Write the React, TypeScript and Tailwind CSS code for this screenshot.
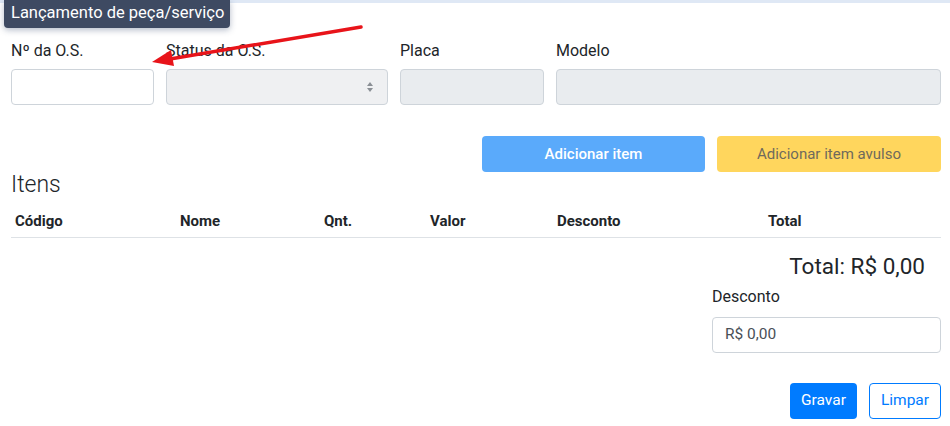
import React from 'react';

const labelCls = 'block mb-[6px] text-[16px] leading-6 text-[#212529]';
const inputCls = 'h-[36px] rounded-[4px] border border-[#ced4da]';

export default function App() {
  return (
    <div className="relative w-[950px] h-[426px] overflow-hidden bg-white font-['Roboto',sans-serif] text-[#212529]">
      <div className="h-[3px] bg-[#dfe8f5]" />

      {/* tooltip */}
      <div className="absolute left-[4px] top-0 h-[28px] w-[226px] rounded-b-[4px] bg-[#3e4a62] pl-[7px] text-[16.5px] leading-[26px] text-white shadow-[0_2px_6px_rgba(40,60,100,0.35)]">
        Lançamento de peça/serviço
      </div>

      <div className="pl-[11px] pr-[9px] pt-[36px]">
        {/* fields */}
        <div className="flex gap-3">
          <div className="w-[143px]">
            <label className={labelCls}>Nº da O.S.</label>
            <div className={`${inputCls} bg-white`} />
          </div>
          <div className="w-[222px]">
            <label className={labelCls}>Status da O.S.</label>
            <div className={`${inputCls} flex items-center justify-end bg-[#eff0f2] pr-[13px]`}>
              <svg width="8" height="12" viewBox="0 0 8 12">
                <path d="M4 1 L7 5 L1 5 Z" fill="#8a8f95" />
                <path d="M4 11 L7 7 L1 7 Z" fill="#8a8f95" />
              </svg>
            </div>
          </div>
          <div className="w-[144px]">
            <label className={labelCls}>Placa</label>
            <div className={`${inputCls} bg-[#e9ecef]`} />
          </div>
          <div className="flex-1">
            <label className={labelCls}>Modelo</label>
            <div className={`${inputCls} bg-[#e9ecef]`} />
          </div>
        </div>

        {/* add buttons */}
        <div className="mt-[31px] flex justify-end gap-3">
          <button className="h-[36px] w-[223px] rounded-[4px] bg-[#5aaafb] text-[15px] font-medium text-white">
            Adicionar item
          </button>
          <button className="h-[36px] w-[224px] rounded-[4px] bg-[#ffd65d] text-[15px] text-[#6f6a5c]">
            Adicionar item avulso
          </button>
        </div>

        <h3 className="-mt-[2px] text-[23px] font-light leading-[29px]">Itens</h3>

        {/* table header */}
        <div className="mt-[9px] grid grid-cols-[165px_144px_106px_127px_211px_1fr] border-b border-[#dee2e6] pb-[4px] pl-[4px] pt-[1px] text-[15px] font-bold leading-6">
          <div>Código</div>
          <div>Nome</div>
          <div>Qnt.</div>
          <div>Valor</div>
          <div>Desconto</div>
          <div>Total</div>
        </div>

        {/* totals */}
        <div className="mt-[14px] pr-[16px] text-right text-[22.5px] leading-[29px]">Total: R$ 0,00</div>

        <div className="ml-auto mt-[4px] w-[229px]">
          <label className="mb-[8px] block text-[16px] leading-6">Desconto</label>
          <div className={`${inputCls} flex items-center bg-white pl-[12px] text-[15.5px] text-[#495057]`}>R$ 0,00</div>
        </div>

        <div className="mt-[30px] flex justify-end gap-3">
          <button className="h-[36px] w-[67px] rounded-[4px] bg-[#007bff] text-[15.5px] text-white">Gravar</button>
          <button className="h-[36px] w-[72px] rounded-[4px] border border-[#007bff] bg-white text-[15.5px] text-[#007bff]">
            Limpar
          </button>
        </div>
      </div>

      {/* red annotation arrow */}
      <svg className="absolute left-0 top-0" width="950" height="426" viewBox="0 0 950 426">
        <line x1="361" y1="27" x2="170" y2="59" stroke="#e8141a" strokeWidth="3.5" strokeLinecap="round" />
        <polygon points="152,62 174,66 171,50" fill="#e8141a" />
      </svg>
    </div>
  );
}
